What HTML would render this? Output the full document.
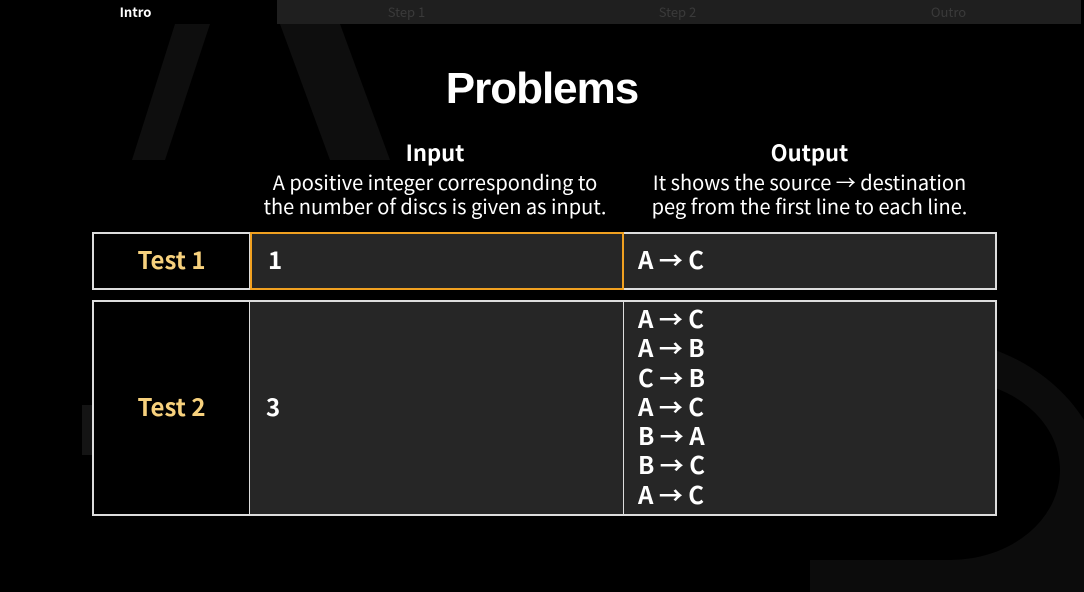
<!DOCTYPE html>
<html><head><meta charset="utf-8"><style>
*{margin:0;padding:0;box-sizing:border-box}
body{width:1084px;height:592px;background:#000;position:relative;overflow:hidden;font-family:"Noto Sans CJK JP","Liberation Sans",sans-serif;color:#fff}
.nav{position:absolute;top:0;left:0;width:1084px;height:24px;display:flex}
.nav div{flex:1;text-align:center;font-size:13px;line-height:23px;color:#3a3a3a}
.nav .on{color:#fff;background:#000}
.navbg{position:absolute;left:277px;top:0;width:804px;height:24px;background:#1f1f1f}
h1{position:absolute;top:64px;left:0;width:1084px;text-align:center;font-size:44px;font-weight:bold;letter-spacing:-1px;font-family:"Liberation Sans",sans-serif}
.hd{position:absolute;text-align:center;font-size:20px;line-height:24px}
.hd b{display:block;font-size:22px;margin-bottom:4px;line-height:28px}
.t{position:absolute;left:92px;width:905px;border:2px solid #ddd;display:flex}
.t div{font-weight:bold;font-size:24px}
.c1{width:156px;color:#f7d17d;display:flex;align-items:center;justify-content:center;border-right:1px solid #ddd;padding-bottom:5px}
.c2{width:374px;background:#262626;display:flex;align-items:center;padding-left:16px;border-right:1px solid #ddd;padding-bottom:5px}
.c3{flex:1;background:#262626;padding-left:14px;display:flex;flex-direction:column;justify-content:center;line-height:29.3px;padding-bottom:5px}
</style></head><body>
<svg style="position:absolute;left:0;top:0" width="1084" height="592">
<polygon points="132,160 175,24 210,24 165,160" fill="#0e0e0e"/>
<polygon points="280,24 340,24 390,160 330,160" fill="#0e0e0e"/>
<path d="M810 340 H900 A180 160 0 0 1 1084 420 V592 H810 V560 H950 A110 90 0 0 0 950 380 H810Z" fill="#0c0c0c"/>
<rect x="82" y="405" width="10" height="50" fill="#141414"/>
</svg>
<div class="navbg"></div>
<div class="nav"><div class="on" style="font-weight:bold">Intro</div><div>Step 1</div><div>Step 2</div><div>Outro</div></div>
<h1>Problems</h1>
<div class="hd" style="left:248px;width:374px;top:138px"><b>Input</b>A positive integer corresponding to<br>the number of discs is given as input.</div>
<div class="hd" style="left:622px;width:375px;top:138px"><b>Output</b>It shows the source → destination<br>peg from the first line to each line.</div>
<div class="t" style="top:232px;height:58px">
<div class="c1">Test 1</div>
<div class="c2" style="border:2px solid #f0a020;margin:-2px 0">1</div>
<div class="c3">A → C</div></div>
<div class="t" style="top:300px;height:216px">
<div class="c1">Test 2</div>
<div class="c2">3</div>
<div class="c3"><span>A → C</span><span>A → B</span><span>C → B</span><span>A → C</span><span>B → A</span><span>B → C</span><span>A → C</span></div></div>
</body></html>
